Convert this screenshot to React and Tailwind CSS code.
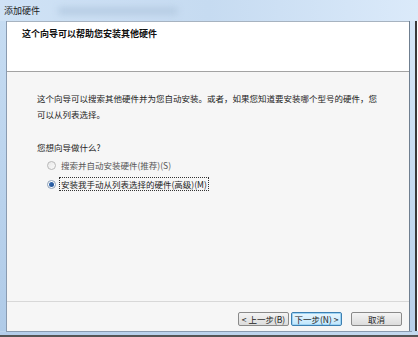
export default function App() {
  const font = { fontFamily: '"Noto Sans CJK SC", "Noto Sans", sans-serif' };
  return (
    <div
      className="w-[418px] h-[337px] overflow-hidden flex flex-col bg-gradient-to-b from-[#c9def3] to-[#bcd4ec] text-[#1a1a1a]"
      style={font}
    >
      {/* title bar */}
      <div className="h-[21px] shrink-0 flex items-center pl-[4px] text-[9px] leading-none bg-gradient-to-r from-[#cfe2f5] via-[#c6dbf1] to-[#dbeafa]">
        <span className="text-[#1a1a1a]">添加硬件</span>
        <div className="ml-[18px] h-[8px] w-[120px] rounded-full bg-[#b7cde4] blur-[3px]" />
      </div>
      <div className="flex-1 flex min-h-0">
        {/* left frame */}
        <div className="w-[7px] shrink-0 flex">
          <div className="w-[6px] bg-gradient-to-b from-[#c6dcf2] to-[#b0cbe8]" />
          <div className="w-[1px] bg-[#8a9bb0]" />
        </div>
        {/* client */}
        <div className="flex-1 flex flex-col bg-[#f6f6f6] border-t border-[#a7b3c0]">
          <div className="h-[50px] shrink-0 bg-white border-b border-[#a3a3a3] pl-[15px] pt-[6px]">
            <div className="text-[9px] leading-[12px] font-bold text-[#111]">这个向导可以帮助您安装其他硬件</div>
          </div>
          <div className="flex-1 flex flex-col pl-[30px] pt-[18px] text-[8.5px] text-[#222]">
            <div className="leading-[16px]">
              这个向导可以搜索其他硬件并为您自动安装。或者，如果您知道要安装哪个型号的硬件，您
              <br />
              可以从列表选择。
            </div>
            <div className="leading-[16px] mt-[17px]">您想向导做什么?</div>
            <div className="mt-[2px] pl-[10px] flex flex-col gap-[3px]">
              <div className="flex items-center h-[16px]">
                <span className="w-[9px] h-[9px] rounded-full border border-[#b8b8b8] bg-gradient-to-br from-[#e8e8e8] to-[#fafafa]" />
                <span className="ml-[5px] text-[#555]">搜索并自动安装硬件(推荐)(S)</span>
              </div>
              <div className="flex items-center h-[16px]">
                <span className="w-[9px] h-[9px] rounded-full border border-[#8d9fb5] bg-white flex items-center justify-center">
                  <span className="w-[5px] h-[5px] rounded-full bg-gradient-to-br from-[#3a6fb3] to-[#1d4f94]" />
                </span>
                <span className="ml-[3px] px-[1px] border border-dotted border-[#333] leading-[12px] text-[#222]">
                  安装我手动从列表选择的硬件(高级)(M)
                </span>
              </div>
            </div>
            <div className="flex-1" />
          </div>
          {/* footer */}
          <div className="h-[30px] shrink-0 border-t border-[#d8d8d8] flex items-start justify-end pt-[10px] pr-[7px] text-[8.5px]">
            <button className="w-[51px] h-[14px] border border-[#8a8a8a] rounded-[2px] bg-gradient-to-b from-[#f4f4f4] to-[#dcdcdc] leading-[12px] text-[#222]">
              &lt; 上一步(B)
            </button>
            <button className="ml-[2px] w-[51px] h-[14px] border border-[#3c7fb1] rounded-[2px] bg-gradient-to-b from-[#eaf6fd] to-[#bee6fd] leading-[12px] text-[#222] shadow-[inset_0_0_0_1px_#9fd4f5]">
              下一步(N) &gt;
            </button>
            <button className="ml-[9px] w-[51px] h-[14px] border border-[#8a8a8a] rounded-[2px] bg-gradient-to-b from-[#f4f4f4] to-[#dcdcdc] leading-[12px] text-[#222]">
              取消
            </button>
          </div>
        </div>
        {/* right frame */}
        <div className="w-[9px] shrink-0 flex">
          <div className="w-[1px] bg-[#6f7f90]" />
          <div className="w-[5px] bg-gradient-to-b from-[#d5e6f7] to-[#b8d0ea]" />
          <div className="w-[2px] bg-[#3a3a3a]" />
          <div className="w-[1px] bg-white" />
        </div>
      </div>
      {/* bottom frame */}
      <div className="h-[6px] shrink-0 flex flex-col">
        <div className="h-[1px] bg-[#8a9bb0] mx-[6px]" />
        <div className="h-[3px] bg-gradient-to-r from-[#b4cdea] to-[#c4d9ef]" />
        <div className="h-[2px] bg-[#555]" />
      </div>
    </div>
  );
}
